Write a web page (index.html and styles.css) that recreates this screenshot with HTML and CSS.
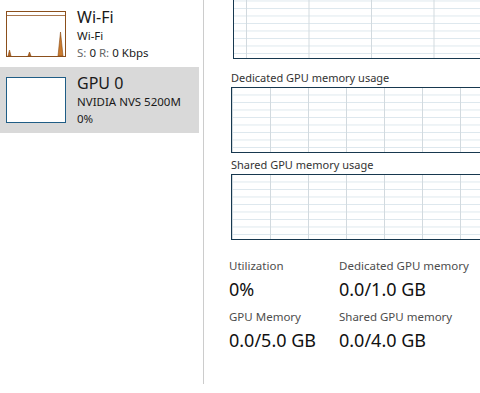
FILE: index.html
```html
<!DOCTYPE html>
<html lang="en">
<head>
    <meta charset="UTF-8">
    <title>Task Manager - GPU 0</title>
    <link rel="stylesheet" href="styles.css">
</head>
<body>
    <div class="window">
        <div class="sidebar">
            <div class="item">
                <div class="thumb thumb-wifi">
                    <svg width="58" height="44" viewBox="0 0 58 44">
                        <line x1="0" y1="3.5" x2="58" y2="3.5" stroke="#a8774e" stroke-width="1"/>
                        <path d="M1 44 L2.5 38 L4 44 Z" fill="#b86a25" stroke="#8a4a12" stroke-width="0.6"/>
                        <path d="M21 44 L22.5 40 L24 44 Z" fill="#b86a25" stroke="#8a4a12" stroke-width="0.6"/>
                        <path d="M51 44 L53.5 20 L56 44 Z" fill="#c97a2e" stroke="#8a4a12" stroke-width="0.6"/>
                    </svg>
                </div>
                <div class="info">
                    <div class="title">Wi-Fi</div>
                    <div class="sub">Wi-Fi</div>
                    <div class="sub"><span class="muted">S:</span> 0 <span class="muted">R:</span> 0 Kbps</div>
                </div>
            </div>
            <div class="item selected">
                <div class="thumb thumb-gpu"></div>
                <div class="info">
                    <div class="title">GPU 0</div>
                    <div class="sub">NVIDIA NVS 5200M</div>
                    <div class="sub">0%</div>
                </div>
            </div>
        </div>

        <div class="main">
            <div class="graph graph-top"></div>

            <div class="graph-label first">Dedicated GPU memory usage</div>
            <div class="graph"></div>

            <div class="graph-label">Shared GPU memory usage</div>
            <div class="graph"></div>

            <div class="stats">
                <div class="stat">
                    <div class="stat-label">Utilization</div>
                    <div class="stat-value">0%</div>
                </div>
                <div class="stat">
                    <div class="stat-label">Dedicated GPU memory</div>
                    <div class="stat-value">0.0/1.0 GB</div>
                </div>
                <div class="stat">
                    <div class="stat-label">GPU Memory</div>
                    <div class="stat-value">0.0/5.0 GB</div>
                </div>
                <div class="stat">
                    <div class="stat-label">Shared GPU memory</div>
                    <div class="stat-value">0.0/4.0 GB</div>
                </div>
            </div>
        </div>
    </div>
</body>
</html>
```

FILE: styles.css
```css
:root {
    --text: #1a1a1a;
    --muted: #666666;
    --selected: #d9d9d9;
    --divider: #cccccc;
    --graph-border: #17384f;
    --grid-v: #d2dadf;
    --grid-h: #dde7ed;
}

* {
    box-sizing: border-box;
    margin: 0;
    padding: 0;
}

html, body {
    width: 480px;
    height: 393px;
    overflow: hidden;
    background: #ffffff;
    font-family: 'Noto Sans', 'Open Sans', sans-serif;
    color: var(--text);
}

.window {
    display: flex;
    height: 384px;
}

/* left list */
.sidebar {
    width: 204px;
    padding: 1px 4px 0 0;
    border-right: 1px solid var(--divider);
    flex-shrink: 0;
}

.item {
    display: flex;
    align-items: flex-start;
    height: 66px;
    padding: 10px 0 0 6px;
}

.item.selected {
    background: var(--selected);
}

.thumb {
    width: 60px;
    height: 46px;
    flex-shrink: 0;
    background: #ffffff;
    margin-right: 11px;
}

.thumb-wifi {
    border: 1px solid #8b4f1c;
}

.thumb-wifi svg {
    display: block;
}

.thumb-gpu {
    border: 1px solid #1f5d86;
}

.info {
    margin-top: -4px;
}

.title {
    font-size: 16px;
    line-height: 20px;
}

.sub {
    font-size: 11.5px;
    line-height: 17px;
}

.muted {
    color: var(--muted);
}

/* right panel */
.main {
    flex-grow: 1;
    padding-left: 27px;
    overflow: hidden;
}

.graph {
    width: 270px;
    height: 66px;
    border: 1px solid var(--graph-border);
    background-color: #ffffff;
    background-image:
        linear-gradient(to right, var(--grid-v) 1px, transparent 1px),
        linear-gradient(to bottom, var(--grid-h) 1px, transparent 1px);
    background-size: 38px 100%, 100% 7.5px;
    background-position: 38px 0, 0 6.5px;
}

.graph-top {
    margin-left: 2px;
    height: 59px;
    border-top: none;
    background-size: 62.5px 100%, 100% 7.5px;
    background-position: 12px 0, 0 0.5px;
}

.graph-label {
    font-size: 11px;
    line-height: 14px;
    color: #333333;
    margin: 5px 0 2px;
}

.graph-label.first {
    margin: 12px 0 2px;
}

.stats {
    display: grid;
    grid-template-columns: 110px 140px;
    row-gap: 5px;
    margin: 18px 0 0 -2px;
}

.stat-label {
    font-size: 11.5px;
    line-height: 16px;
    color: #4d4d4d;
}

.stat-value {
    font-size: 18px;
    line-height: 30px;
    color: #111111;
}
```
